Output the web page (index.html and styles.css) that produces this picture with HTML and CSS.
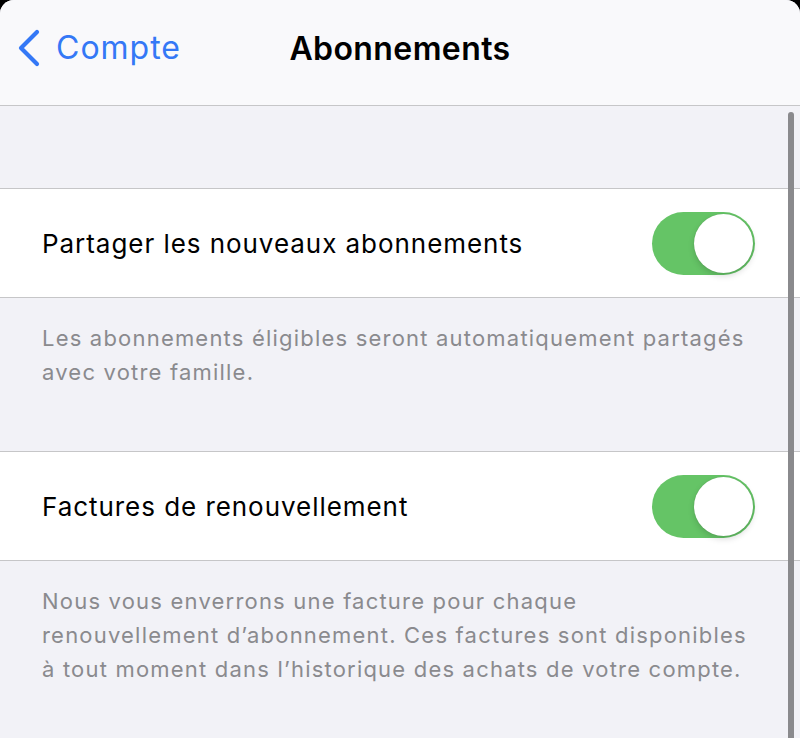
FILE: index.html
```html
<!DOCTYPE html>
<html lang="fr">
<head>
<meta charset="utf-8">
<title>Abonnements</title>
<link rel="stylesheet" href="styles.css">
</head>
<body>
<div class="screen">
  <header class="navbar">
    <a class="back" href="#">
      <svg class="chevron" width="25" height="38" viewBox="0 0 25 38" aria-hidden="true">
        <path d="M21 3 L5 19 L21 35" fill="none" stroke="currentColor" stroke-width="4.2" stroke-linecap="round" stroke-linejoin="round"/>
      </svg>
      <span>Compte</span>
    </a>
    <h1 class="title">Abonnements</h1>
  </header>
  <main class="content">
    <div class="spacer"></div>
    <section class="group">
      <div class="row">
        <span class="label">Partager les nouveaux abonnements</span>
        <span class="toggle on"><span class="knob"></span></span>
      </div>
    </section>
    <p class="footer">Les abonnements éligibles seront automatiquement partagés avec votre famille.</p>
    <section class="group">
      <div class="row">
        <span class="label">Factures de renouvellement</span>
        <span class="toggle on"><span class="knob"></span></span>
      </div>
    </section>
    <p class="footer">Nous vous enverrons une facture pour chaque renouvellement d’abonnement. Ces factures sont disponibles à tout moment dans l’historique des achats de votre compte.</p>
  </main>
  <div class="scrollbar"></div>
</div>
</body>
</html>
```
FILE: styles.css
```css
* { box-sizing: border-box; }
html, body {
  margin: 0;
  padding: 0;
  background: #000;
  height: 100%;
}
body {
  font-family: Inter, "Noto Sans", "Liberation Sans", sans-serif;
}
.screen {
  position: relative;
  width: 800px;
  height: 738px;
  background: #f2f2f7;
  border-radius: 14px 14px 0 0;
  overflow: hidden;
}
.navbar {
  position: relative;
  height: 106px;
  background: #f9f9fb;
  border-bottom: 1px solid #c6c6c8;
  display: flex;
  align-items: center;
  padding: 0 0 10px 16px;
}
.back {
  display: flex;
  align-items: center;
  gap: 15px;
  color: #3478f6;
  text-decoration: none;
  font-size: 32px;
  letter-spacing: 1px;
}
.chevron { display: block; }
.title {
  position: absolute;
  left: 0;
  right: 0;
  top: 0;
  height: 96px;
  margin: 0;
  display: flex;
  align-items: center;
  justify-content: center;
  font-size: 32px;
  font-weight: 600;
  letter-spacing: 0.4px;
  color: #000;
  pointer-events: none;
}
.content {
  display: flex;
  flex-direction: column;
}
.spacer { height: 82px; }
.group {
  background: #fff;
  border-top: 1px solid #c6c6c8;
  border-bottom: 1px solid #c6c6c8;
}
.row {
  height: 108px;
  display: flex;
  align-items: center;
  justify-content: space-between;
  padding: 0 45px 0 42px;
}
.label {
  font-size: 26px;
  color: #000;
  letter-spacing: 0.95px;
}
.toggle {
  width: 103px;
  height: 63px;
  border-radius: 32px;
  background: #e9e9ea;
  display: flex;
  align-items: center;
  padding: 2px;
}
.toggle.on {
  background: #65c466;
  justify-content: flex-end;
}
.knob {
  width: 59px;
  height: 59px;
  border-radius: 50%;
  background: #fff;
  box-shadow: 0 3px 6px rgba(0,0,0,0.15), 0 0 1px rgba(0,0,0,0.2);
}
.footer {
  margin: 0;
  padding: 23px 42px 62px 42px;
  font-size: 22px;
  line-height: 34px;
  color: #8a8a8e;
  letter-spacing: 1.2px;
}
.scrollbar {
  position: absolute;
  left: 788px;
  top: 112px;
  width: 6px;
  height: 640px;
  border-radius: 3px;
  background: #8a8a8d;
}
```
